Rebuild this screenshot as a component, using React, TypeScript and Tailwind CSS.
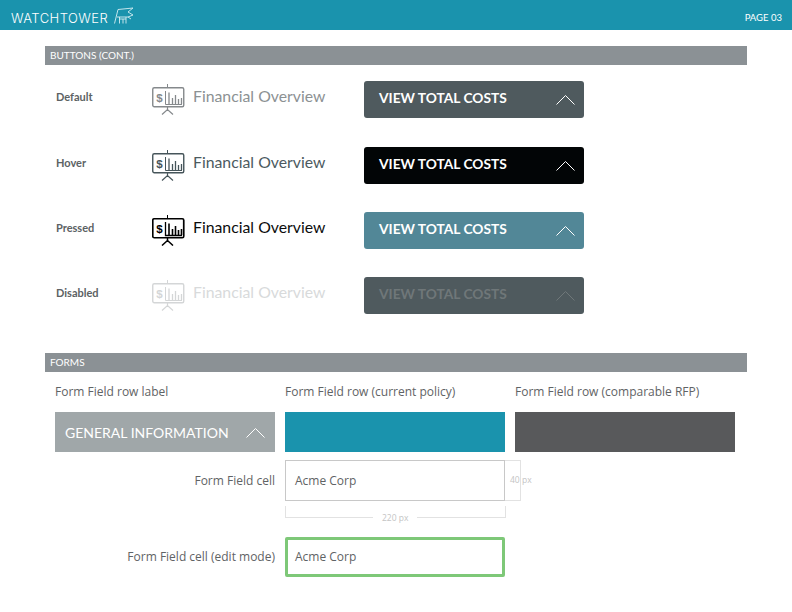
import React from "react";

const Chevron = ({ color = "#fff" }: { color?: string }) => (
  <svg width="19" height="11" viewBox="0 0 19 11" fill="none" className="block">
    <path d="M0.5 10.5 L9.5 1.5 L18.5 10.5" stroke={color} strokeWidth="1" />
  </svg>
);

const ChartIcon = ({ color, sw = 1 }: { color: string; sw?: number }) => (
  <svg width="33" height="31" viewBox="0 0 33 31" fill="none" className="block shrink-0">
    <path d="M15.5 0V3.5" stroke={color} strokeWidth="1" />
    <rect x="0.75" y="3.75" width="31" height="19" rx="1.5" stroke={color} strokeWidth={sw + 0.4} />
    <path d="M13.5 7V20.5H30" stroke={color} strokeWidth={sw} />
    <path d="M17 20V8.5M20.5 20V14M23.5 20V11M26.5 20V15M29.5 20V14" stroke={color} strokeWidth={sw + 0.3} />
    <path d="M15.5 23V27M10 30.5L15.5 25.5L21 30.5" stroke={color} strokeWidth={sw + 0.2} />
    <text x="7.5" y="17.5" textAnchor="middle" fontSize="11.5" fontWeight="700" fontFamily="Liberation Sans, sans-serif" fill={color}>$</text>
  </svg>
);

type RowProps = {
  label: string;
  iconColor: string;
  textColor: string;
  bg: string;
  btnText: string;
  chev: string;
  sw?: number;
  cls: string;
};

const Row = ({ label, iconColor, textColor, bg, btnText, chev, sw, cls }: RowProps) => (
  <div className={`flex items-center h-[37px] ${cls}`}>
    <div className="w-[96px] pl-[11px] shrink-0 text-[11px] font-bold text-[#5c6264] relative top-[-2px]">{label}</div>
    <div className="w-[223px] shrink-0 pl-[11px] flex items-center">
      <ChartIcon color={iconColor} sw={sw} />
      <span className="ml-[8px] text-[15.8px] leading-none relative top-[-4px]" style={{ color: textColor }}>Financial Overview</span>
    </div>
    <div
      className="w-[220px] h-[37px] rounded-[3px] flex items-center justify-between pl-[15px] pr-[9px] text-[13.75px] font-bold"
      style={{ backgroundColor: bg, color: btnText }}
    >
      <span className="relative top-[-1px]">VIEW TOTAL COSTS</span>
      <Chevron color={chev} />
    </div>
  </div>
);

const SectionBar = ({ children, cls }: { children: React.ReactNode; cls: string }) => (
  <div className={`h-[19px] bg-[#8b9195] flex items-center pl-[5px] text-[10px] text-white ${cls}`}>{children}</div>
);

export default function App() {
  return (
    <div className="w-[792px] h-[612px] bg-white overflow-hidden font-['Lato',sans-serif]">
      <header className="h-[30px] bg-[#1a93ad] flex items-center justify-between pl-[11px] pr-[10px] text-white">
        <div className="flex items-center gap-[6px]">
          <span className="font-['Inter',sans-serif] text-[13px] tracking-[0.45px] font-light leading-none relative top-[3px]">WATCHTOWER</span>
          <svg width="20" height="17" viewBox="0 0 20 17" fill="none" stroke="#d5edf2" strokeWidth="0.9" className="relative top-[0px]">
            <path d="M0.5 16.5L4 2.5L19 1L14 5L19 8L14 10H3" />
            <path d="M5.5 10V16.5M9 12V16.5M12 10V16.5M5.5 12H12M14 10L17 12" />
          </svg>
        </div>
        <span className="text-[9.5px] relative top-[3px]">PAGE 03</span>
      </header>

      <main className="px-[45px]">
        <SectionBar cls="mt-[16px]">BUTTONS (CONT.)</SectionBar>
        <Row cls="mt-[16px]" label="Default" iconColor="#85898c" textColor="#8c9193" bg="#4f5a5e" btnText="#ffffff" chev="#ffffff" />
        <Row cls="mt-[29px]" label="Hover" iconColor="#46555a" textColor="#4c5a5f" bg="#020506" btnText="#ffffff" chev="#ffffff" />
        <Row cls="mt-[28px]" label="Pressed" iconColor="#000000" textColor="#0c0c0c" bg="#528797" btnText="#ffffff" chev="#ffffff" sw={1.3} />
        <Row cls="mt-[28px]" label="Disabled" iconColor="#d4d6d7" textColor="#d8dadb" bg="#4f5a5e" btnText="#6f7779" chev="#6f7779" />

        <SectionBar cls="mt-[39px]">FORMS</SectionBar>

        <div className="font-['Open_Sans',sans-serif] text-[#5f6365] text-[12px]">
          <div className="grid grid-cols-[220px_220px_220px] gap-x-[10px] pl-[10px] mt-[11px] h-[18px] items-center">
            <span>Form Field row label</span>
            <span>Form Field row (current policy)</span>
            <span>Form Field row (comparable RFP)</span>
          </div>

          <div className="grid grid-cols-[220px_220px_220px] gap-x-[10px] pl-[10px] mt-[11px]">
            <div className="h-[40px] bg-[#a0a7a9] flex items-center justify-between pl-[10px] pr-[10px] text-white font-['Lato',sans-serif] text-[14px]">
              <span>GENERAL INFORMATION</span>
              <Chevron />
            </div>
            <div className="h-[40px] bg-[#1a93ad]" />
            <div className="h-[40px] bg-[#58595b]" />
          </div>

          <div className="grid grid-cols-[220px_220px] gap-x-[10px] pl-[10px] mt-[8px]">
            <div className="h-[41px] flex items-center justify-end">Form Field cell</div>
            <div className="relative h-[41px] border border-[#c8c8c8] flex items-center pl-[9px] bg-white">
              Acme Corp
              <div className="absolute left-[219px] top-[-1px] w-[16px] h-[41px] border border-l-0 border-[#e2e2e2]" />
              <span className="absolute left-[224px] top-[12px] text-[8.5px] leading-[14px] whitespace-nowrap text-[#c4c4c4]">40 px</span>
              <div className="absolute left-[-1px] top-[45px] w-[221px] h-[12px] border border-t-0 border-[#e2e2e2]" />
              <span className="absolute left-[87px] top-[51px] px-[9px] bg-white text-[8.5px] leading-[11px] whitespace-nowrap text-[#c4c4c4]">220 px</span>
            </div>
          </div>

          <div className="grid grid-cols-[220px_220px] gap-x-[10px] pl-[10px] mt-[36px]">
            <div className="h-[40px] flex items-center justify-end">Form Field cell (edit mode)</div>
            <div className="h-[40px] border-[3px] border-[#7ec878] rounded-[2px] flex items-center pl-[7px] bg-white">Acme Corp</div>
          </div>
        </div>
      </main>
    </div>
  );
}
